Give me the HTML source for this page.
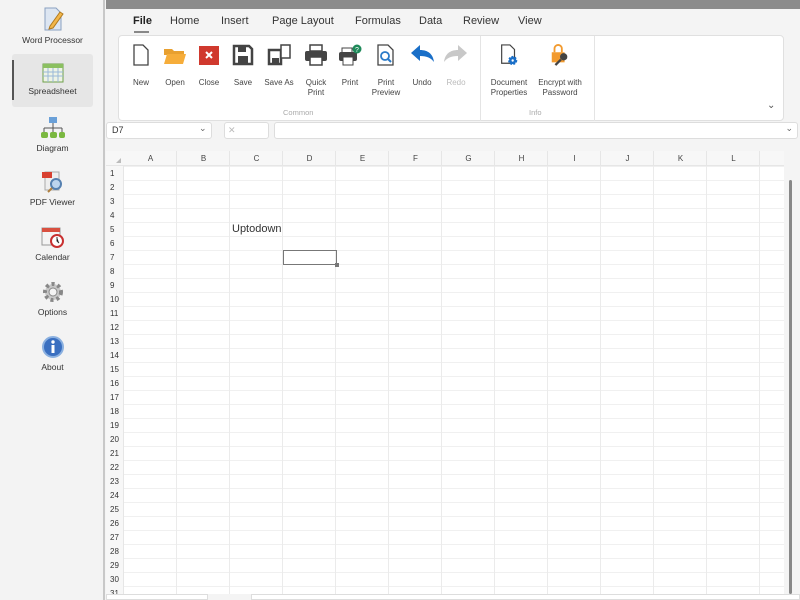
<!DOCTYPE html>
<html><head><meta charset="utf-8"><style>
*{margin:0;padding:0;box-sizing:border-box}
body{width:800px;height:600px;overflow:hidden;background:#f4f4f4;font-family:"Liberation Sans",sans-serif;position:relative;color:#333}
.abs{position:absolute}
#side{left:0;top:0;width:105px;height:600px;background:#f3f3f3;border-right:2px solid #c8c8c8}
.si{position:absolute;left:0;width:105px;text-align:center;font-size:8.5px;color:#333}
.si svg{display:block;margin:0 auto 3px}
#topbar{left:106px;top:0;width:694px;height:9px;background:#8c8c8c}
.tab{position:absolute;top:15px;font-size:11px;color:#333}
#ribbon{left:118px;top:35px;width:666px;height:86px;background:#fff;border:1px solid #e0e0e0;border-radius:4px}
.btn{position:absolute;top:8px;text-align:center;font-size:8px;color:#444;line-height:10px}
.btn svg{display:block;margin:0 auto 12px}
.grp{position:absolute;top:72px;font-size:7.5px;color:#aaa}
.fb{background:#fff;border:1px solid #ddd;border-radius:3px;height:17px;top:122px}
#grid{left:106px;top:151px;width:678px;height:443px;background:#fff;overflow:hidden}
#colh{position:absolute;left:0;top:0;width:678px;height:15px;background:#f7f7f7;border-bottom:1px solid #e6e6e6}
.ch{position:absolute;top:3px;width:53px;text-align:center;font-size:8px;color:#444}
#cells{position:absolute;left:18px;top:15px;width:660px;height:428px;
background-image:linear-gradient(to right,#ebebeb 1px,transparent 1px),linear-gradient(to bottom,#f0f0f0 1px,transparent 1px);
background-size:53px 14px,53px 14px;background-position:-1px 14px,0 14px}
#rowh{position:absolute;left:0;top:15px;width:18px;height:428px;background:#f7f7f7;border-right:1px solid #e6e6e6}
.rn{position:absolute;left:4px;font-size:8px;color:#333}
</style></head><body>
<div id="side" class="abs">
 <div class="si" style="top:6px"><svg width="24" height="26" viewBox="0 0 24 26"><path d="M4 2h11l5 5v17H4z" fill="#dde6f2" stroke="#8aa0c0"/><path d="M9 20l10-14 3 2-10 14-4 1z" fill="#f2b64a" stroke="#b07a20"/></svg>Word Processor</div>
 <div style="position:absolute;left:12px;top:54px;width:81px;height:53px;background:#e6e6e6;border-radius:3px"></div>
 <div style="position:absolute;left:12px;top:60px;width:2px;height:40px;background:#555"></div>
 <div class="si" style="top:63px"><svg width="22" height="20" viewBox="0 0 22 20"><rect x="1" y="1" width="20" height="18" fill="#eef3e6" stroke="#6fa04a"/><rect x="1" y="1" width="20" height="4" fill="#8bc060"/><path d="M1 9h20M1 13h20M6 5v14M11 5v14M16 5v14" stroke="#9ab8d8"/></svg>Spreadsheet</div>
 <div class="si" style="top:116px"><svg width="26" height="24" viewBox="0 0 26 24"><rect x="9" y="1" width="8" height="6" fill="#6aa0d8"/><path d="M13 7v5M4 12h18M4 12v4M13 12v4M22 12v4" stroke="#555"/><rect x="1" y="16" width="7" height="6" rx="2" fill="#7ab840"/><rect x="10" y="16" width="7" height="6" rx="2" fill="#7ab840"/><rect x="19" y="16" width="6" height="6" rx="2" fill="#7ab840"/></svg>Diagram</div>
 <div class="si" style="top:170px"><svg width="24" height="24" viewBox="0 0 24 24"><rect x="4" y="2" width="14" height="18" fill="#eee" stroke="#aaa"/><rect x="1" y="2" width="10" height="6" fill="#d84030"/><circle cx="15" cy="14" r="5" fill="#bcd4ee" stroke="#5580b0" stroke-width="2"/><path d="M11 18l-4 4" stroke="#b08040" stroke-width="2"/></svg>PDF Viewer</div>
 <div class="si" style="top:225px"><svg width="24" height="24" viewBox="0 0 24 24"><rect x="1" y="3" width="18" height="17" fill="#f4f4f4" stroke="#999"/><rect x="1" y="3" width="18" height="4" fill="#d85040"/><circle cx="16" cy="16" r="6" fill="#fff" stroke="#c83030" stroke-width="2"/><path d="M16 12v4l2 2" stroke="#333"/></svg>Calendar</div>
 <div class="si" style="top:280px"><svg width="24" height="24" viewBox="0 0 24 24"><circle cx="12" cy="12" r="8" fill="#c8c8c8" stroke="#888" stroke-width="4" stroke-dasharray="3 3"/><circle cx="12" cy="12" r="4" fill="#f3f3f3" stroke="#888"/></svg>Options</div>
 <div class="si" style="top:335px"><svg width="24" height="24" viewBox="0 0 24 24"><circle cx="12" cy="12" r="10" fill="#3a6fc0" stroke="#8ab0e0" stroke-width="2"/><rect x="10.5" y="10" width="3" height="8" fill="#fff"/><circle cx="12" cy="7" r="1.7" fill="#fff"/></svg>About</div>
</div>
<div id="topbar" class="abs"></div>
<div class="tab" style="left:133px;font-weight:bold;color:#222">File</div>
<div class="abs" style="left:134px;top:31px;width:15px;height:2px;background:#888"></div>
<div class="tab" style="left:170px">Home</div>
<div class="tab" style="left:221px">Insert</div>
<div class="tab" style="left:272px">Page Layout</div>
<div class="tab" style="left:355px">Formulas</div>
<div class="tab" style="left:419px">Data</div>
<div class="tab" style="left:463px">Review</div>
<div class="tab" style="left:518px">View</div>
<div id="ribbon" class="abs">
 <div class="btn" style="left:8px;width:28px"><svg width="20" height="22" viewBox="0 0 20 22"><path d="M3 1h9l5 5v15H3z" fill="#fff" stroke="#444" stroke-width="1.3"/></svg>New</div>
 <div class="btn" style="left:42px;width:28px"><svg width="24" height="22" viewBox="0 0 24 22"><path d="M1 5h8l2 2h10v4H1z" fill="#e8a030"/><path d="M1 20l3-10h19l-3 10z" fill="#f6ad3a"/></svg>Open</div>
 <div class="btn" style="left:76px;width:28px"><svg width="22" height="22" viewBox="0 0 22 22"><rect x="1" y="2" width="20" height="19" fill="#d0392e"/><path d="M8 8l6 6M14 8l-6 6" stroke="#fff" stroke-width="2"/></svg>Close</div>
 <div class="btn" style="left:110px;width:28px"><svg width="22" height="22" viewBox="0 0 22 22"><path d="M2 2h15l3 3v15H2z" fill="none" stroke="#444" stroke-width="2.5"/><rect x="6" y="3" width="8" height="5" fill="#444"/><rect x="6" y="12" width="10" height="7" fill="#444"/></svg>Save</div>
 <div class="btn" style="left:142px;width:36px"><svg width="24" height="22" viewBox="0 0 24 22"><path d="M2 6h12v14H2z" fill="none" stroke="#444" stroke-width="2.5"/><rect x="5" y="14" width="7" height="5" fill="#444"/><rect x="14" y="1" width="9" height="13" fill="#fff" stroke="#444" stroke-width="1.5"/></svg>Save As</div>
 <div class="btn" style="left:182px;width:30px"><svg width="24" height="22" viewBox="0 0 24 22"><rect x="6" y="1" width="12" height="6" fill="#fff" stroke="#444" stroke-width="1.5"/><rect x="1" y="7" width="22" height="10" rx="2" fill="#444"/><rect x="6" y="13" width="12" height="8" fill="#fff" stroke="#444" stroke-width="1.5"/></svg>Quick<br>Print</div>
 <div class="btn" style="left:216px;width:30px"><svg width="24" height="22" viewBox="0 0 24 22"><rect x="4" y="4" width="10" height="5" fill="#fff" stroke="#444"/><rect x="1" y="8" width="18" height="9" rx="2" fill="#444"/><rect x="5" y="13" width="10" height="8" fill="#fff" stroke="#444"/><circle cx="19" cy="5" r="4.5" fill="#1f8a5a"/><text x="17" y="8" font-size="7" fill="#fff" font-family="Liberation Sans">?</text></svg>Print</div>
 <div class="btn" style="left:250px;width:34px"><svg width="22" height="22" viewBox="0 0 22 22"><path d="M3 1h10l5 5v15H3z" fill="#fff" stroke="#444" stroke-width="1.3"/><circle cx="10" cy="12" r="4" fill="none" stroke="#2a7ac8" stroke-width="1.8"/><path d="M13 15l3 3" stroke="#2a7ac8" stroke-width="2"/></svg>Print<br>Preview</div>
 <div class="btn" style="left:288px;width:30px"><svg width="26" height="22" viewBox="0 0 26 22"><path d="M2 9l9-8v5c8 0 13 4 14 12-3-4-7-6-14-6v5z" fill="#1a6fc8"/></svg>Undo</div>
 <div class="btn" style="left:322px;width:30px;color:#bbb"><svg width="26" height="22" viewBox="0 0 26 22"><path d="M24 9l-9-8v5C7 6 2 10 1 18c3-4 7-6 14-6v5z" fill="#c8c8c8"/></svg>Redo</div>
 <div class="grp" style="left:164px">Common</div>
 <div style="position:absolute;left:361px;top:0;width:1px;height:85px;background:#e4e4e4"></div>
 <div class="btn" style="left:368px;width:44px"><svg width="22" height="22" viewBox="0 0 22 24"><path d="M3 1h9l5 5v15H3z" fill="#fff" stroke="#444" stroke-width="1.3"/><circle cx="15" cy="18" r="4" fill="#1a6fc8" stroke="#1a6fc8" stroke-width="2" stroke-dasharray="2 1.5"/><circle cx="15" cy="18" r="1.3" fill="#fff"/></svg>Document<br>Properties</div>
 <div class="btn" style="left:414px;width:54px"><svg width="24" height="22" viewBox="0 0 24 24"><path d="M6 9V5a4 4 0 018 0v4" fill="none" stroke="#f29a2e" stroke-width="2"/><rect x="3" y="9" width="14" height="11" fill="#f29a2e"/><circle cx="16" cy="14" r="4" fill="#444"/><path d="M13 17l-6 6" stroke="#444" stroke-width="2.5"/></svg>Encrypt with<br>Password</div>
 <div class="grp" style="left:410px">Info</div>
 <div style="position:absolute;left:475px;top:0;width:1px;height:85px;background:#e4e4e4"></div>
 <div style="position:absolute;left:648px;top:64px;font-size:10px;color:#555">&#8964;</div>
</div>
<div class="abs fb" style="left:106px;width:106px"><span style="position:absolute;left:5px;top:2px;font-size:9px">D7</span><span style="position:absolute;left:92px;top:0px;font-size:9px;color:#666">&#8964;</span></div>
<div class="abs fb" style="left:224px;width:45px"><span style="position:absolute;left:3px;top:2px;font-size:9px;color:#bbb">✕</span></div>
<div class="abs fb" style="left:274px;width:524px"><span style="position:absolute;right:4px;top:0;font-size:9px;color:#666">&#8964;</span></div>
<div id="grid" class="abs">
 <div id="colh">
  <div style="position:absolute;left:10px;top:7px;width:0;height:0;border-left:5px solid transparent;border-bottom:5px solid #bbb"></div>
  <div class="ch" style="left:18px">A</div><div class="ch" style="left:71px">B</div><div class="ch" style="left:124px">C</div><div class="ch" style="left:177px">D</div><div class="ch" style="left:230px">E</div><div class="ch" style="left:283px">F</div><div class="ch" style="left:336px">G</div><div class="ch" style="left:389px">H</div><div class="ch" style="left:442px">I</div><div class="ch" style="left:495px">J</div><div class="ch" style="left:548px">K</div><div class="ch" style="left:601px">L</div>
  <div style="position:absolute;left:18px;top:0;width:660px;height:15px;background-image:linear-gradient(to right,#e6e6e6 1px,transparent 1px);background-size:53px 15px;background-position:-1px 0"></div>
 </div>
 <div id="cells"></div>
 <div id="rowh">
  <div class="rn" style="top:3px">1</div><div class="rn" style="top:17px">2</div><div class="rn" style="top:31px">3</div><div class="rn" style="top:45px">4</div><div class="rn" style="top:59px">5</div><div class="rn" style="top:73px">6</div><div class="rn" style="top:87px">7</div><div class="rn" style="top:101px">8</div><div class="rn" style="top:115px">9</div><div class="rn" style="top:129px">10</div><div class="rn" style="top:143px">11</div><div class="rn" style="top:157px">12</div><div class="rn" style="top:171px">13</div><div class="rn" style="top:185px">14</div><div class="rn" style="top:199px">15</div><div class="rn" style="top:213px">16</div><div class="rn" style="top:227px">17</div><div class="rn" style="top:241px">18</div><div class="rn" style="top:255px">19</div><div class="rn" style="top:269px">20</div><div class="rn" style="top:283px">21</div><div class="rn" style="top:297px">22</div><div class="rn" style="top:311px">23</div><div class="rn" style="top:325px">24</div><div class="rn" style="top:339px">25</div><div class="rn" style="top:353px">26</div><div class="rn" style="top:367px">27</div><div class="rn" style="top:381px">28</div><div class="rn" style="top:395px">29</div><div class="rn" style="top:409px">30</div><div class="rn" style="top:423px">31</div>
 </div>
 <div style="position:absolute;left:126px;top:72px;font-size:11px;color:#333">Uptodown</div>
 <div style="position:absolute;left:177px;top:99px;width:54px;height:15px;border:1.5px solid #777"></div>
 <div style="position:absolute;left:229px;top:112px;width:4px;height:4px;background:#777"></div>
</div>
<div class="abs" style="left:784px;top:151px;width:16px;height:443px;background:#f4f4f4"></div>
<div class="abs" style="left:789px;top:180px;width:3px;height:414px;background:#888;border-radius:2px"></div>
<div class="abs" style="left:106px;top:594px;width:102px;height:6px;background:#fff;border:1px solid #ddd"></div>
<div class="abs" style="left:251px;top:594px;width:549px;height:6px;background:#fff;border:1px solid #ddd"></div>
</body></html>
